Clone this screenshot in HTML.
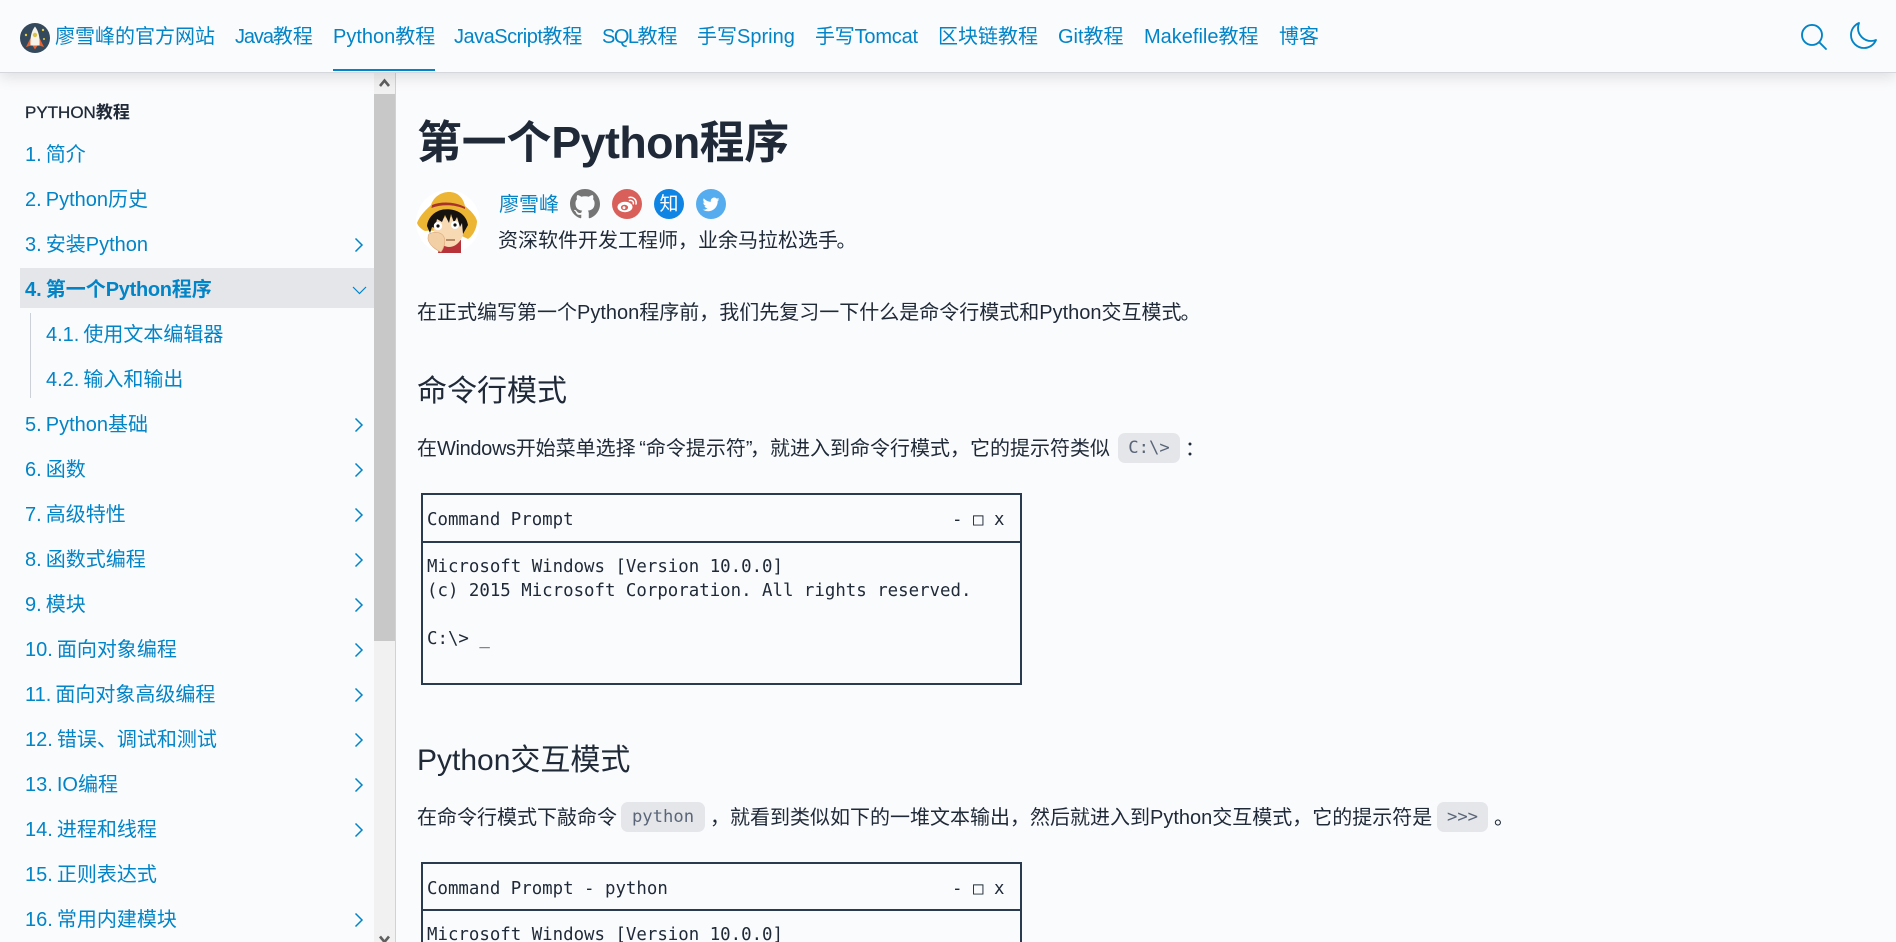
<!DOCTYPE html>
<html lang="zh">
<head>
<meta charset="utf-8">
<title>第一个Python程序</title>
<style>
html,body{margin:0;padding:0;width:1896px;height:942px;overflow:hidden;background:#fafbfd}
body{position:relative;font-family:"Liberation Sans","Noto Sans CJK SC",sans-serif;font-size:20px;color:#1f2937}
.t{position:absolute;white-space:pre;line-height:40px;height:40px}
.l{color:#0284c7}
.r{word-spacing:-1.5px}
#nav{position:absolute;left:0;top:0;width:1896px;height:72px;background:#fafbfd;border-bottom:1px solid #d5d7dc;box-shadow:0 4px 14px rgba(0,0,0,.12);z-index:5}
.sb{position:absolute;left:374px;width:21px}
.m{font-family:"DejaVu Sans Mono","Liberation Mono",monospace;font-size:17.4px;line-height:24px;height:24px;position:absolute;white-space:pre;color:#1f2937}
.box{position:absolute;border:2px solid #2a3a4f;box-sizing:border-box}
.c{position:absolute;background:#e5e6ea;border-radius:7px;height:30px;line-height:31px;font-family:"DejaVu Sans Mono","Liberation Mono",monospace;font-size:17.2px;color:#5a6678;text-align:center}
.ch{position:absolute;fill:none;stroke:#0284c7;stroke-width:1.5}
</style>
</head>
<body>

<!-- sidebar scrollbar -->
<div class="sb" style="top:72px;height:870px;background:#f1f1f1"></div>
<div class="sb" style="top:94px;height:547px;background:#c8c8c8"></div>
<div style="position:absolute;left:395px;top:72px;width:1px;height:870px;background:#d0d2d6"></div>
<svg style="position:absolute;left:379px;top:77px" width="11" height="11" viewBox="0 0 11 11"><path d="M1 9L5.5 3.5L10 9" fill="none" stroke="#5f5f5f" stroke-width="2.6"/></svg>
<svg style="position:absolute;left:379px;top:935px" width="11" height="7" viewBox="0 0 11 7"><path d="M1 1.5L5.5 7L10 1.5" fill="none" stroke="#5f5f5f" stroke-width="2.6"/></svg>

<!-- nav -->
<div id="nav">
  <svg style="position:absolute;left:20px;top:23px" width="30" height="30" viewBox="0 0 30 30">
    <circle cx="15" cy="15" r="15" fill="#34495b"/>
    <circle cx="6" cy="12" r="1.2" fill="#e8c93e"/><circle cx="23" cy="7" r="1.2" fill="#e8c93e"/><circle cx="24" cy="16" r="1" fill="#e8c93e"/>
    <path d="M10.5 15L6 24L11 22.5Z" fill="#e8622f"/><path d="M19.5 15L24 24L19 22.5Z" fill="#e8622f"/>
    <path d="M15 3.5C11.5 8 10 14 10.5 22.5H19.5C20 14 18.5 8 15 3.5Z" fill="#f6f4ea"/>
    <circle cx="15" cy="12" r="2.2" fill="#d9c24a"/>
    <path d="M12.5 22.5H17.5L15 26.5Z" fill="#e8622f"/>
  </svg>
  <span class="t l" style="left:55px;top:17px">廖雪峰的官方网站</span>
  <span class="t l" style="left:235px;top:17px"><span style="letter-spacing:-1.1px">Java</span>教程</span>
  <span class="t l" style="left:333px;top:17px">Python教程</span>
  <span class="t l" style="left:454px;top:17px"><span style="letter-spacing:-.5px">JavaScript</span>教程</span>
  <span class="t l" style="left:602px;top:17px"><span style="letter-spacing:-1.5px">SQL</span>教程</span>
  <span class="t l" style="left:697px;top:17px">手写Spring</span>
  <span class="t l" style="left:815px;top:17px"><span style="letter-spacing:-.2px">手写Tomcat</span></span>
  <span class="t l" style="left:938px;top:17px">区块链教程</span>
  <span class="t l" style="left:1058px;top:17px">Git教程</span>
  <span class="t l" style="left:1144px;top:17px">Makefile教程</span>
  <span class="t l" style="left:1279px;top:17px">博客</span>
  <div style="position:absolute;left:333px;top:69px;width:102px;height:2px;background:#0284c7"></div>
  <svg style="position:absolute;left:1797.5px;top:21px" width="32" height="32" viewBox="0 0 24 24" fill="none" stroke="#0284c7" stroke-width="1.4" stroke-linecap="round" stroke-linejoin="round"><path d="M21 21l-5.197-5.197m0 0A7.5 7.5 0 105.196 5.196a7.5 7.5 0 0010.607 10.607z"/></svg>
  <svg style="position:absolute;left:1847px;top:20px" width="32" height="32" viewBox="0 0 24 24" fill="none" stroke="#0284c7" stroke-width="1.4" stroke-linecap="round" stroke-linejoin="round"><path d="M21.752 15.002A9.718 9.718 0 0118 15.75c-5.385 0-9.75-4.365-9.75-9.75 0-1.33.266-2.597.748-3.752A9.753 9.753 0 003 11.25C3 16.635 7.365 21 12.75 21a9.753 9.753 0 009.002-5.998z"/></svg>
</div>

<!-- sidebar -->
<span class="t" style="left:25px;top:93px;font-size:17px;color:#1f2937;-webkit-text-stroke:.3px #1f2937">PYTHON<b style="-webkit-text-stroke:0">教程</b></span>
<div style="position:absolute;left:20px;top:268px;width:354px;height:40px;background:#e5e6ea"></div>
<div style="position:absolute;left:30px;top:313px;width:1px;height:85px;background:#ccd0d8"></div>

<span class="t l r" style="left:25px;top:135px">1. 简介</span>
<span class="t l r" style="left:25px;top:180px">2. Python历史</span>
<span class="t l r" style="left:25px;top:225px">3. 安装Python</span>
<span class="t l r" style="left:25px;top:270px;font-weight:700">4. 第一个<span style="letter-spacing:-.3px">Python</span>程序</span>
<span class="t l r" style="left:46px;top:315px">4.1. 使用文本编辑器</span>
<span class="t l r" style="left:46px;top:360px">4.2. 输入和输出</span>
<span class="t l r" style="left:25px;top:405px">5. Python基础</span>
<span class="t l r" style="left:25px;top:450px">6. 函数</span>
<span class="t l r" style="left:25px;top:495px">7. 高级特性</span>
<span class="t l r" style="left:25px;top:540px">8. 函数式编程</span>
<span class="t l r" style="left:25px;top:585px">9. 模块</span>
<span class="t l r" style="left:25px;top:630px">10. 面向对象编程</span>
<span class="t l r" style="left:25px;top:675px">11. 面向对象高级编程</span>
<span class="t l r" style="left:25px;top:720px">12. 错误、调试和测试</span>
<span class="t l r" style="left:25px;top:765px">13. IO编程</span>
<span class="t l r" style="left:25px;top:810px">14. 进程和线程</span>
<span class="t l r" style="left:25px;top:855px">15. 正则表达式</span>
<span class="t l r" style="left:25px;top:900px">16. 常用内建模块</span>

<svg class="ch" style="left:354px;top:237px" width="10" height="16" viewBox="0 0 10 16"><path d="M1.5 1.5L8 8L1.5 14.5"/></svg>
<svg class="ch" style="left:352px;top:286px;stroke-width:1.2" width="15" height="9" viewBox="0 0 15 9"><path d="M1 1L7.5 7.5L14 1"/></svg>
<svg class="ch" style="left:354px;top:417px" width="10" height="16" viewBox="0 0 10 16"><path d="M1.5 1.5L8 8L1.5 14.5"/></svg>
<svg class="ch" style="left:354px;top:462px" width="10" height="16" viewBox="0 0 10 16"><path d="M1.5 1.5L8 8L1.5 14.5"/></svg>
<svg class="ch" style="left:354px;top:507px" width="10" height="16" viewBox="0 0 10 16"><path d="M1.5 1.5L8 8L1.5 14.5"/></svg>
<svg class="ch" style="left:354px;top:552px" width="10" height="16" viewBox="0 0 10 16"><path d="M1.5 1.5L8 8L1.5 14.5"/></svg>
<svg class="ch" style="left:354px;top:597px" width="10" height="16" viewBox="0 0 10 16"><path d="M1.5 1.5L8 8L1.5 14.5"/></svg>
<svg class="ch" style="left:354px;top:642px" width="10" height="16" viewBox="0 0 10 16"><path d="M1.5 1.5L8 8L1.5 14.5"/></svg>
<svg class="ch" style="left:354px;top:687px" width="10" height="16" viewBox="0 0 10 16"><path d="M1.5 1.5L8 8L1.5 14.5"/></svg>
<svg class="ch" style="left:354px;top:732px" width="10" height="16" viewBox="0 0 10 16"><path d="M1.5 1.5L8 8L1.5 14.5"/></svg>
<svg class="ch" style="left:354px;top:777px" width="10" height="16" viewBox="0 0 10 16"><path d="M1.5 1.5L8 8L1.5 14.5"/></svg>
<svg class="ch" style="left:354px;top:822px" width="10" height="16" viewBox="0 0 10 16"><path d="M1.5 1.5L8 8L1.5 14.5"/></svg>
<svg class="ch" style="left:354px;top:912px" width="10" height="16" viewBox="0 0 10 16"><path d="M1.5 1.5L8 8L1.5 14.5"/></svg>

<!-- main content -->
<span class="t" style="left:417px;top:113px;height:60px;line-height:60px;font-size:44.8px;font-weight:700">第一个<span style="letter-spacing:-.6px">Python</span>程序</span>

<!-- avatar -->
<svg style="position:absolute;left:416px;top:190px" width="64" height="64" viewBox="0 0 64 64">
  <circle cx="32" cy="32" r="32" fill="#fff"/>
  <path d="M24 52L22 63H45L45 50Z" fill="#b8323a"/>
  <path d="M1 33C4 25 10 20 15 15C18 6 26 2 33 2C41 2 47 7 49 16C54 20 60 26 61 31C61 38 57 46 52 49C40 42 22 40 9 41C5 39 2 36 1 33Z" fill="#edb534"/>
  <path d="M16 15C26 11 39 12 49 17L49 19C39 14.5 26 14 15.5 18Z" fill="#a9322c"/>
  <path d="M17 34C17 26 47 24 48 34C49 47 42 57 33 57C25 57 17 47 17 34Z" fill="#f7d9b4"/>
  <path d="M11 36C12 27 19 21 27 19.5C37 18 50 22 52 35L47 44L46 33L44 37L41 27L38 33L35 24L33 33L29 25L26 32L21 29L19 38L16 37L14 43Z" fill="#16120f"/>
  <ellipse cx="22" cy="36" rx="4.2" ry="4.2" fill="#fff"/><circle cx="22" cy="36" r="1.6" fill="#111"/>
  <ellipse cx="39" cy="35" rx="4" ry="4" fill="#fff"/><circle cx="39" cy="35" r="1.6" fill="#111"/>
  <path d="M30 50H39" stroke="#8a5a3a" stroke-width="1.2"/>
  <path d="M13 44C18 41 26 42 28 47C30 52 28 58 25 62C20 60 13 55 12 49C12 47 12 45 13 44Z" fill="#f3cfa6" stroke="#d9a878" stroke-width=".6"/>
</svg>

<span class="t l" style="left:499px;top:185px">廖雪峰</span>
<svg style="position:absolute;left:570px;top:189px" width="30" height="30" viewBox="0 0 16 16"><path fill="#757575" d="M8 0C3.58 0 0 3.58 0 8c0 3.54 2.29 6.53 5.47 7.59.4.07.55-.17.55-.38 0-.19-.01-.82-.01-1.49-2.01.37-2.53-.49-2.69-.94-.09-.23-.48-.94-.82-1.13-.28-.15-.68-.52-.01-.53.63-.01 1.08.58 1.23.82.72 1.21 1.87.87 2.33.66.07-.52.28-.87.51-1.07-1.78-.2-3.64-.89-3.64-3.95 0-.87.31-1.59.82-2.15-.08-.2-.36-1.02.08-2.12 0 0 .67-.21 2.2.82.64-.18 1.32-.27 2-.27.68 0 1.36.09 2 .27 1.53-1.04 2.2-.82 2.2-.82.44 1.1.16 1.92.08 2.12.51.56.82 1.27.82 2.15 0 3.07-1.87 3.75-3.65 3.95.29.25.54.73.54 1.48 0 1.07-.01 1.93-.01 2.2 0 .21.15.46.55.38A8.013 8.013 0 0016 8c0-4.42-3.58-8-8-8z"/></svg>
<svg style="position:absolute;left:612px;top:189px" width="30" height="30" viewBox="0 0 30 30">
  <circle cx="15" cy="15" r="15" fill="#d9605a"/>
  <ellipse cx="13" cy="18" rx="7.5" ry="5.2" fill="#fff"/>
  <ellipse cx="12.5" cy="18.5" rx="3.6" ry="2.8" fill="#d9605a"/>
  <circle cx="12" cy="18.7" r="1.4" fill="#fff"/>
  <path d="M17 8.5C21 7.5 25 10.5 24 15M17.5 11.5C19.5 11 22 12.5 21.3 14.8" fill="none" stroke="#fff" stroke-width="1.5" stroke-linecap="round"/>
</svg>
<div style="position:absolute;left:654px;top:189px;width:30px;height:30px;border-radius:50%;background:#0e84e4;color:#fff;text-align:center;line-height:31px;font-size:19px">知</div>
<svg style="position:absolute;left:696px;top:189px" width="30" height="30" viewBox="0 0 30 30">
  <circle cx="15" cy="15" r="15" fill="#55acee"/>
  <g transform="translate(6.6 7) scale(.7)"><path fill="#fff" d="M23.953 4.57a10 10 0 01-2.825.775 4.958 4.958 0 002.163-2.723c-.951.555-2.005.959-3.127 1.184a4.92 4.92 0 00-8.384 4.482C7.69 8.095 4.067 6.13 1.64 3.162a4.822 4.822 0 00-.666 2.475c0 1.71.87 3.213 2.188 4.096a4.904 4.904 0 01-2.228-.616v.06a4.923 4.923 0 003.946 4.827 4.996 4.996 0 01-2.212.085 4.936 4.936 0 004.604 3.417 9.867 9.867 0 01-6.102 2.105c-.39 0-.779-.023-1.17-.067a13.995 13.995 0 007.557 2.209c9.053 0 13.998-7.496 13.998-13.985 0-.21 0-.42-.015-.63A9.935 9.935 0 0024 4.59z"/></g>
</svg>
<span class="t" style="left:498px;top:221px">资深软件开发工程师，业余马拉松选手<span style="margin-left:-1.5px">。</span></span>

<span class="t" style="left:417px;top:293px">在正式编写第一个Python程序前，我们先复习一下什么是命令行模式和Python交互模式<span style="margin-left:-1px">。</span></span>

<span class="t" style="left:417px;top:371.5px;font-size:30px">命令行模式</span>

<span class="t" style="left:417px;top:429px">在<span style="letter-spacing:-.35px">Windows</span>开始菜单选择<span style="margin-left:3.5px">“</span>命令提示符<span style="margin-right:-2.5px">”</span>，就进入到命令行模式，它的提示符类似</span>
<div class="c" style="left:1118px;top:433px;width:62px">C:\&gt;</div>
<span class="t" style="left:1185px;top:429px">：</span>

<!-- box 1 -->
<div class="box" style="left:421px;top:493px;width:601px;height:192px"></div>
<div style="position:absolute;left:421px;top:541px;width:601px;height:2px;background:#2a3a4f"></div>
<span class="m" style="left:427px;top:508px">Command Prompt</span>
<span class="m" style="left:952px;top:508px">-</span>
<span class="m" style="left:973px;top:508px">□</span>
<span class="m" style="left:994px;top:508px">x</span>
<span class="m" style="left:427px;top:555px">Microsoft Windows [Version 10.0.0]</span>
<span class="m" style="left:427px;top:579px">(c) 2015 Microsoft Corporation. All rights reserved.</span>
<span class="m" style="left:427px;top:627px">C:\&gt; _</span>

<span class="t" style="left:417px;top:740.5px;font-size:30px">Python交互模式</span>

<span class="t" style="left:417px;top:798px">在命令行模式下敲命令</span>
<div class="c" style="left:621px;top:802px;width:84px">python</div>
<span class="t" style="left:710px;top:798px">，就看到类似如下的一堆文本输出，然后就进入到Python交互模式，它的提示符是</span>
<div class="c" style="left:1437px;top:802px;width:51px">&gt;&gt;&gt;</div>
<span class="t" style="left:1494px;top:798px">。</span>

<!-- box 2 -->
<div class="box" style="left:421px;top:862px;width:601px;height:120px"></div>
<div style="position:absolute;left:421px;top:909px;width:601px;height:2px;background:#2a3a4f"></div>
<span class="m" style="left:427px;top:877px">Command Prompt - python</span>
<span class="m" style="left:952px;top:877px">-</span>
<span class="m" style="left:973px;top:877px">□</span>
<span class="m" style="left:994px;top:877px">x</span>
<span class="m" style="left:427px;top:923px">Microsoft Windows [Version 10.0.0]</span>

</body>
</html>
